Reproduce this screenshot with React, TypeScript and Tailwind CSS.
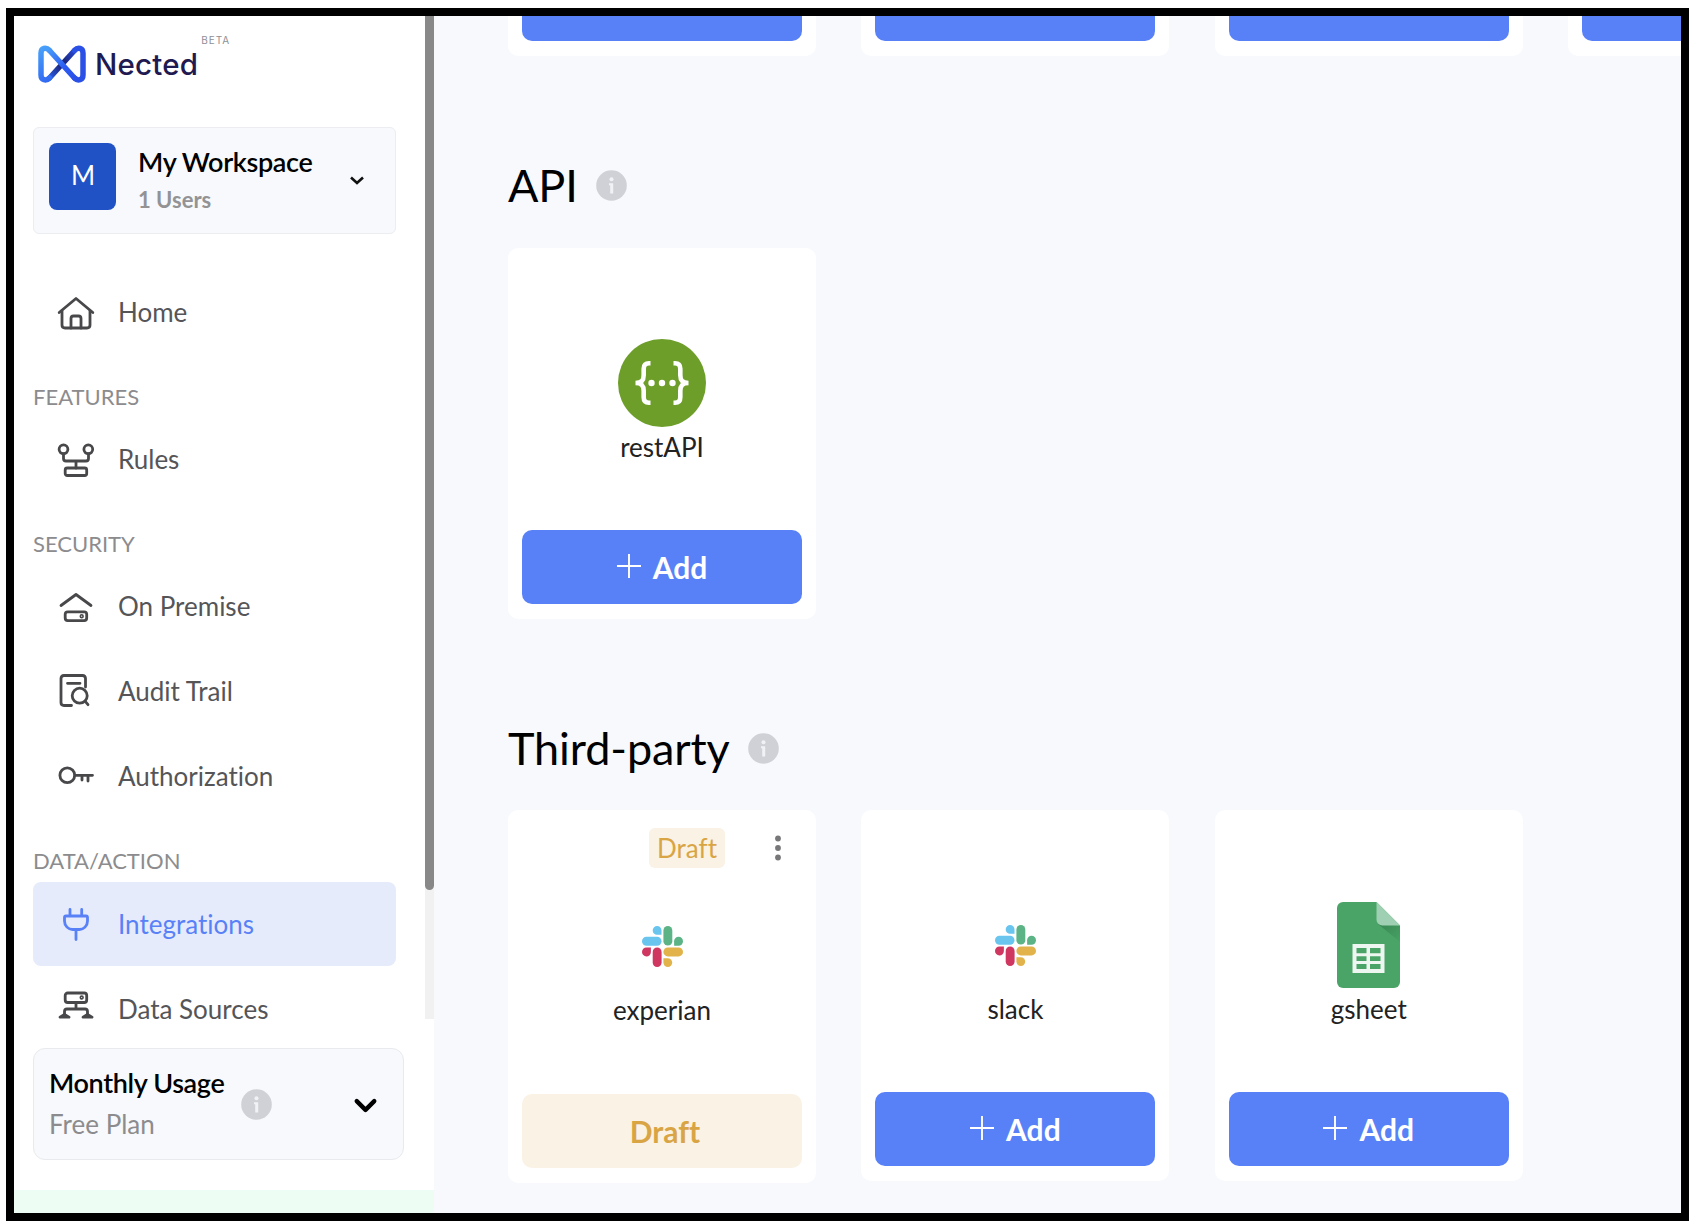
import type { ReactNode } from "react"
import { ChevronDown } from "lucide-react"

type IconName = "home" | "rules" | "premise" | "audit" | "key" | "plug" | "sources"

const iconPaths: Record<IconName, ReactNode> = {
    home: (
        <>
            <path d="M1.2 16.500 18 2.500l16.800 14" />
            <path d="M4 15v14q0 3 3 3h22q3 0 3-3V15" />
            <path d="M13 32V22.500q0-2.500 2.500-2.500h5q2.500 0 2.500 2.500V32" />
        </>
    ),
    rules: (
        <>
            <circle cx="5.500" cy="6.300" r="4.400" />
            <circle cx="30.300" cy="6.300" r="4.400" />
            <path d="M5.500 11v4.500q0 2.500 2.500 2.500h20q2.500 0 2.500-2.500V11M18 18v7" />
            <rect x="7.200" y="25" width="21.500" height="7.500" rx="2" />
        </>
    ),
    premise: (
        <>
            <path d="M3 15.500 18 4.500l15 11" />
            <rect x="7.200" y="21.800" width="21.500" height="8.800" rx="2.500" />
            <circle cx="23.700" cy="26.200" r=".8" />
        </>
    ),
    audit: (
        <>
            <path d="M27.500 12V3.500q0-3-3-3H6q-3 0-3 3v24q0 3 3 3h7.500M9.500 8.300h12.500" />
            <circle cx="21.700" cy="20.700" r="7.500" />
            <path d="m27 26.200 3 3.500" />
        </>
    ),
    key: (
        <>
            <circle cx="9.300" cy="15.300" r="7.400" />
            <path d="M17 15.300h17.500M24 15.500V20M30 15.500V21" />
        </>
    ),
    plug: (
        <path d="M12 1.500v6M23.700 1.500v6M8 8h20q1.500 0 1.500 1.500V13c0 5-4 8.500-8 8.500h-7c-4 0-8-3.500-8-8.500V9.500Q6.500 8 8 8zM18 21.500v10" />
    ),
    sources: (
        <>
            <rect x="7.200" y="0" width="21.500" height="9.500" rx="2.500" />
            <circle cx="23.700" cy="4.500" r=".8" />
            <path d="M18 10v6M6.500 22.500v-4q0-2.500 2.500-2.500h18q2.500 0 2.500 2.500v4" />
            <path d="M2 24.200 6.500 21.500l4.500 2.700zM25 24.200l4.500-2.700 4.500 2.700z" />
        </>
    ),
}

function NavItem({ icon, label, active }: { icon: IconName; label: string; active?: boolean }) {
    return (
        <a className={`flex h-[84px] shrink-0 items-center gap-6 rounded-lg pl-[25px] text-[26px] ${active ? "bg-[#e5ebfb] text-[#5881f7]" : "text-[#555558]"}`}>
            <svg width="36" height="36" viewBox="0 0 36 36" fill="none" stroke={active ? "#5881f7" : "#48484b"} strokeWidth="2.800" strokeLinecap="round" strokeLinejoin="round" className="mt-[3px] shrink-0 overflow-visible">
                {iconPaths[icon]}
            </svg>
            <span className="leading-8">{label}</span>
        </a>
    )
}

function NavLabel({ children }: { children: ReactNode }) {
    return <div className="h-[63px] shrink-0 pt-[29px] text-[22px] leading-[27px] text-[#8c8c8e]">{children}</div>
}

function InfoIcon() {
    return (
        <svg width="31" height="31" viewBox="0 0 31 31" className="shrink-0">
            <circle cx="15.500" cy="15.500" r="15.300" fill="#d0d1d6" />
            <circle cx="15.500" cy="9.300" r="2" fill="#f1f2f5" />
            <path d="M13 13.200h4.200V23.500h-3v-8.300H13z" fill="#f1f2f5" />
        </svg>
    )
}

function Logo() {
    return (
        <svg width="48" height="38" viewBox="0 0 48 38" fill="none" strokeWidth="5.500" strokeLinecap="round">
            <defs>
                <linearGradient id="left" x1="3" y1="3" x2="20" y2="36" gradientUnits="userSpaceOnUse">
                    <stop stopColor="#48a0fa" />
                    <stop offset="1" stopColor="#2f62f0" />
                </linearGradient>
                <linearGradient id="rise" x1="10" y1="34" x2="40" y2="4" gradientUnits="userSpaceOnUse">
                    <stop stopColor="#2f62f0" />
                    <stop offset=".4" stopColor="#1c2a86" />
                    <stop offset=".6" stopColor="#1c2a86" />
                    <stop offset="1" stopColor="#2a50e6" />
                </linearGradient>
                <linearGradient id="fall" x1="8" y1="4" x2="40" y2="34" gradientUnits="userSpaceOnUse">
                    <stop stopColor="#48a0fa" />
                    <stop offset=".6" stopColor="#2c5bf2" />
                    <stop offset="1" stopColor="#2a50e6" />
                </linearGradient>
            </defs>
            <path d="M11.500 33 36.500 5.500" stroke="url(#rise)" />
            <path d="M36.500 5.500C40 1.500 45 3 45 8v22c0 5-5 6.500-8.500 3" stroke="#2a50e6" />
            <path d="M11.500 5.500C8 1.500 3 3 3 8v22c0 5 5 6.500 8.500 3" stroke="url(#left)" />
            <path d="M11.500 5.500 36.500 33" stroke="url(#fall)" />
        </svg>
    )
}

function SlackIcon() {
    return (
        <svg width="41" height="41" viewBox="0 0 41 41">
            <g fill="#69c5ee">
                <path d="M19.500 8.800H15A4.400 4.400 0 1 1 19.500 4.400z" />
                <rect y="10.800" width="19.500" height="8.900" rx="4.450" />
            </g>
            <g fill="#5cb486">
                <rect x="21.400" width="8.900" height="19.600" rx="4.450" />
                <path d="M32.100 19.700v-4.500a4.450 4.450 0 1 1 4.450 4.500z" />
            </g>
            <g fill="#e2b34b">
                <rect x="21.400" y="21.500" width="19.600" height="8.900" rx="4.450" />
                <path d="M21.400 32.200h4.400a4.400 4.400 0 1 1-4.400 4.400z" />
            </g>
            <g fill="#cf3660">
                <path d="M8.900 21.500V26a4.450 4.450 0 1 1-4.450-4.500z" />
                <rect x="10.700" y="21.500" width="8.900" height="19.500" rx="4.450" />
            </g>
        </svg>
    )
}

function RestIcon() {
    return (
        <svg width="88" height="88" viewBox="0 0 88 88" fill="none">
            <circle cx="44" cy="44" r="44" fill="#6d9e2a" />
            <g stroke="#fff" strokeWidth="4.600">
                <path d="M32.500 24.300H31c-4 0-5.300 2-5.300 5.500v6.200c0 4.500-1.500 8-8.200 8 6.700 0 8.200 3.500 8.200 8v6.200c0 3.500 1.300 5.500 5.300 5.500h1.500" />
                <path d="M55.500 24.300H57c4 0 5.300 2 5.300 5.500v6.200c0 4.500 1.500 8 8.200 8-6.700 0-8.200 3.500-8.200 8v6.200c0 3.500-1.300 5.500-5.300 5.500h-1.500" />
            </g>
            <g fill="#fff">
                <circle cx="33.500" cy="44" r="3.200" />
                <circle cx="44" cy="44" r="3.200" />
                <circle cx="54.500" cy="44" r="3.200" />
            </g>
        </svg>
    )
}

function SheetIcon() {
    return (
        <svg width="63" height="86" viewBox="0 0 63 86">
            <defs>
                <linearGradient id="fold" x1="46" y1="22" x2="63" y2="40" gradientUnits="userSpaceOnUse">
                    <stop stopColor="#3a8a55" />
                    <stop offset="1" stopColor="#48a265" />
                </linearGradient>
            </defs>
            <path d="M6 0h33.500L63 23.500V80a6 6 0 0 1-6 6H6a6 6 0 0 1-6-6V6a6 6 0 0 1 6-6z" fill="#4ba467" />
            <path d="m41 22 22 18V23.500z" fill="url(#fold)" />
            <path d="M39.500 0 63 23.500H45.500a6 6 0 0 1-6-6z" fill="#9fd0b3" />
            <path fillRule="evenodd" fill="#edf6f0" d="M15.500 42h32v29h-32zM19.500 46v5.200h10V46zm13.500 0v5.200h10.500V46zM19.500 54.200v4.800h10v-4.800zm13.500 0v4.800h10.500v-4.800zM19.500 62v5h10v-5zm13.500 0v5h10.500v-5z" />
        </svg>
    )
}

interface CardProps {
    name?: string
    icon?: ReactNode
    draft?: boolean
}

function IntegrationCard({ name, icon, draft }: CardProps) {
    return (
        <div className={`relative flex w-[308px] shrink-0 flex-col items-center rounded-[10px] bg-white px-3.5 pb-[15px] ${draft ? "h-[373px] pt-[92px]" : "h-[371px] pt-[91px]"}`}>
            {draft && (
                <div className="absolute top-[18px] right-[35px] flex items-center gap-[50px]">
                    <span className="flex h-10 w-[76px] items-center justify-center rounded-md bg-[#faf2e5] text-[26px] text-[#d9a544]">Draft</span>
                    <svg width="6" height="26" viewBox="0 0 6 26" fill="#77777a">
                        <circle cx="3" cy="3.500" r="2.900" />
                        <circle cx="3" cy="13" r="2.900" />
                        <circle cx="3" cy="22.500" r="2.900" />
                    </svg>
                </div>
            )}
            <div className="flex h-[88px] items-center justify-center">{icon}</div>
            <div className="mt-1 text-[26px] leading-8 text-[#222]">{name}</div>
            {draft ? (
                <button className="mt-auto h-[74px] w-full rounded-[10px] bg-[#faf2e5] pl-1.5 text-[30px] font-bold text-[#d9a544]">Draft</button>
            ) : (
                <button className="mt-auto flex h-[74px] w-full items-center justify-center gap-3 rounded-[10px] bg-[#5881f7] text-[30px] font-bold text-white">
                    <svg width="24" height="24" viewBox="0 0 24 24" stroke="#fff" strokeWidth="1.900" className="-mt-0.5">
                        <path d="M12 0v24M0 12h24" />
                    </svg>
                    {name && "Add"}
                </button>
            )}
        </div>
    )
}

function SectionTitle({ children }: { children: ReactNode }) {
    return (
        <div className="flex items-center gap-[18px] text-[45px] leading-[54px] tracking-[-0.1px] text-black">
            <h2>{children}</h2>
            <InfoIcon />
        </div>
    )
}

function Sidebar() {
    return (
        <aside className="flex w-[420px] shrink-0 flex-col bg-white">
            <div className="flex h-[1003px] shrink-0 overflow-hidden">
                <div className="flex flex-1 flex-col pr-[29px] pl-[19px]">
                    <div className="flex shrink-0 items-start pt-[19px] pl-[5px]">
                        <div className="mt-[10px] flex items-center gap-[9px]">
                            <Logo />
                            <span className="font-['Inter',sans-serif] text-[29.500px] leading-[38px] font-medium tracking-[0.2px] text-[#1f1a52]">Nected</span>
                        </div>
                        <span className="ml-[3px] font-['Inter',sans-serif] text-[10px] leading-[10px] tracking-[1px] text-[#8f8f96]">BETA</span>
                    </div>

                    <div className="mt-11 flex h-[107px] w-[363px] shrink-0 rounded-md border border-[#ebedf0] bg-[#f7f9fc] pt-[15px] pl-[15px]">
                        <div className="flex h-[67px] w-[67px] items-center justify-center rounded-lg bg-[#2052c5] pb-[3px] pl-px text-[26px] text-white">M</div>
                        <div className="ml-[22px] w-[212px]">
                            <div className="mt-[3px] text-[27px] leading-8 font-semibold tracking-[-0.350px] text-black">My Workspace</div>
                            <div className="mt-2 text-[22px] leading-7 font-bold text-[#939395]">1 Users</div>
                        </div>
                        <svg width="14" height="9" viewBox="0 0 14 9" fill="none" stroke="#111" strokeWidth="2.600" className="mt-[33px]">
                            <path d="m1 1.500 6 5.500 6-5.500" />
                        </svg>
                    </div>

                    <nav className="mt-9 flex w-[363px] flex-col">
                        <NavItem icon="home" label="Home" />
                        <NavLabel>FEATURES</NavLabel>
                        <NavItem icon="rules" label="Rules" />
                        <NavLabel>SECURITY</NavLabel>
                        <div className="flex flex-col gap-px">
                            <NavItem icon="premise" label="On Premise" />
                            <NavItem icon="audit" label="Audit Trail" />
                            <NavItem icon="key" label="Authorization" />
                        </div>
                        <NavLabel>DATA/ACTION</NavLabel>
                        <div className="mt-px flex flex-col gap-px">
                            <NavItem icon="plug" label="Integrations" active />
                            <NavItem icon="sources" label="Data Sources" />
                        </div>
                    </nav>
                </div>
                <div className="w-[9px] bg-[#f1f1f1]">
                    <div className="h-[874px] rounded-b-full bg-[#888]" />
                </div>
            </div>

            <div className="mt-[29px] ml-[19px] flex h-28 w-[371px] shrink-0 items-center rounded-xl border border-[#e9eaed] bg-[#f7f9fc] pl-[15px]">
                <div className="w-[192px]">
                    <div className="-mt-px text-[27px] leading-8 font-semibold tracking-[-0.350px] text-black">Monthly Usage</div>
                    <div className="mt-[9px] text-[26px] leading-8 text-[#8c8c8e]">Free Plan</div>
                </div>
                <InfoIcon />
                <ChevronDown size={35} strokeWidth={3} className="mt-[3px] ml-[76px]" />
            </div>

            <div className="mt-auto h-[23px] bg-[#edfdf4]" />
        </aside>
    )
}

export default function App() {
    return (
        <div className="h-[1229px] w-[1697px] overflow-hidden bg-white pt-2 pl-1.5 font-['Lato',sans-serif] [font-variant-ligatures:none]">
            <div className="flex h-[1213px] w-[1683px] overflow-hidden border-8 border-black bg-[#f7f9fd]">
                <Sidebar />
                <main className="flex flex-1 flex-col overflow-hidden pl-[74px]">
                    <div className="flex h-10 shrink-0 items-end gap-[45.400px] overflow-hidden">
                        <IntegrationCard />
                        <IntegrationCard />
                        <IntegrationCard />
                        <IntegrationCard />
                    </div>

                    <section className="mt-[102px]">
                        <SectionTitle>API</SectionTitle>
                        <div className="mt-9 flex">
                            <IntegrationCard name="restAPI" icon={<RestIcon />} />
                        </div>
                    </section>

                    <section className="mt-[102px]">
                        <SectionTitle>Third-party</SectionTitle>
                        <div className="mt-[35px] flex gap-[45.400px]">
                            <IntegrationCard name="experian" icon={<SlackIcon />} draft />
                            <IntegrationCard name="slack" icon={<SlackIcon />} />
                            <IntegrationCard name="gsheet" icon={<SheetIcon />} />
                        </div>
                    </section>
                </main>
            </div>
        </div>
    )
}
